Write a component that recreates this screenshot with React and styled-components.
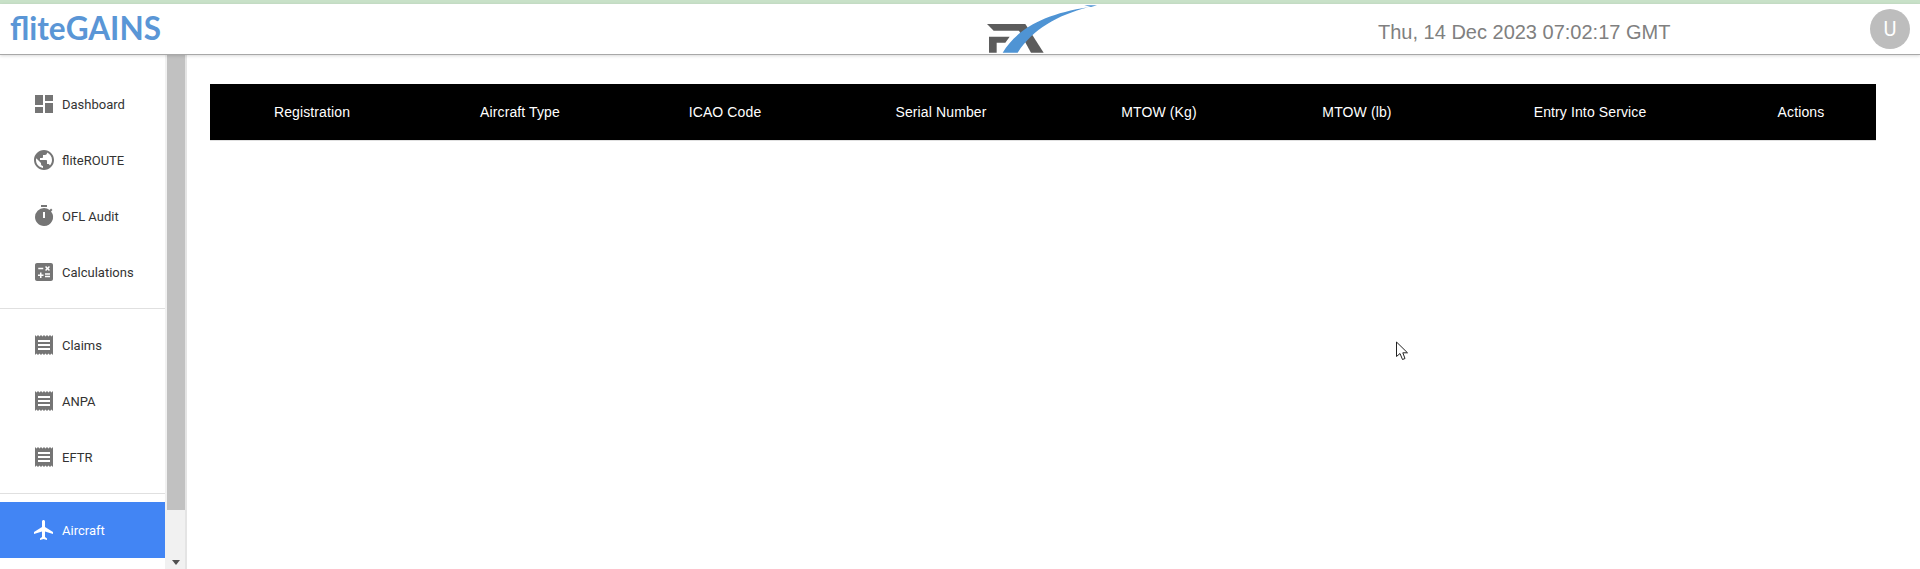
import React from "react";
import styled, { createGlobalStyle } from "styled-components";
import { MdDashboard, MdPublic, MdTimer, MdCalculate, MdReceipt, MdFlight } from "react-icons/md";

const Global = createGlobalStyle`
  html, body { margin: 0; padding: 0; background: #fff; height: 569px; overflow: hidden; }
  * { box-sizing: border-box; }
`;

const Page = styled.div`
  position: relative;
  width: 1920px;
  height: 569px;
  display: flex;
  flex-direction: column;
  overflow: hidden;
  font-family: Roboto, sans-serif;
`;
const TopBand = styled.div`
  height: 4px;
  background: #c8e1c8;
  flex: none;
`;
const Header = styled.header`
  height: 51px;
  flex: none;
  display: grid;
  grid-template-columns: 960px 408px 1fr auto;
  align-items: center;
  background: #fff;
  border-bottom: 1px solid #a8a8a8;
  box-shadow: 0 1px 3px rgba(0, 0, 0, 0.15);
  padding: 0 10px;
  position: relative;
  z-index: 1;
`;
const Brand = styled.div`
  display: flex;
  align-items: center;
  justify-content: space-between;
  height: 50px;
`;
const BrandName = styled.span`
  font-family: Lato, "Open Sans", sans-serif;
  font-weight: 700;
  font-size: 31.5px;
  line-height: 44px;
  color: #5a96d6;
  font-variant-ligatures: common-ligatures;
  margin-top: -3px;
`;
const FxMark = styled.svg`
  display: block;
  width: 113.33px;
  height: 50px;
  margin-right: -130px;
  flex: none;
`;
const Clock = styled.div`
  grid-column: 3;
  font-family: "Liberation Sans", Arial, sans-serif;
  font-size: 20px;
  color: #808080;
  margin-top: 7px;
`;
const Avatar = styled.div`
  grid-column: 4;
  width: 40px;
  height: 40px;
  border-radius: 50%;
  background: #bdbdbd;
  color: #fff;
  display: flex;
  align-items: center;
  justify-content: center;
  font-size: 20px;
`;
const Body = styled.div`
  flex: 1;
  display: flex;
  min-height: 0;
`;
const Sidebar = styled.aside`
  width: 165px;
  flex: none;
  padding-top: 21px;
  display: flex;
  flex-direction: column;
`;
const NavItem = styled.div`
  height: 56px;
  flex: none;
  display: flex;
  align-items: center;
  gap: 6px;
  padding-left: 32px;
  font-size: 13px;
  color: ${(p) => (p.$active ? "#fff" : "#333")};
  background: ${(p) => (p.$active ? "#4285f4" : "transparent")};
  svg { color: ${(p) => (p.$active ? "#fff" : "#757575")}; flex: none; }
`;
const Divider = styled.hr`
  margin: 8px 0;
  border: 0;
  border-top: 1px solid #e0e0e0;
  height: 1px;
  flex: none;
`;
const ScrollTrack = styled.div`
  width: 22px;
  flex: none;
  background: #f1f1f1;
  border-right: 2px solid #e4e4e4;
  padding-left: 2px;
  display: flex;
  flex-direction: column;
  justify-content: space-between;
`;
const ScrollThumb = styled.div`
  height: 455px;
  width: 18px;
  background: #c1c1c1;
`;
const ScrollArrow = styled.div`
  align-self: center;
  width: 0;
  height: 0;
  margin: 0 0 4px -1px;
  border-left: 4px solid transparent;
  border-right: 4px solid transparent;
  border-top: 5px solid #505050;
`;
const Main = styled.main`
  flex: 1;
  padding: 29px 44px 0 23px;
`;
const TableHead = styled.div`
  height: 57px;
  display: grid;
  grid-template-columns: 204px 212px 198px 234px 202px 194px 272px 150px;
  align-items: center;
  background: #000;
  border-bottom: 1px solid #e0e0e0;
`;
const HeadCell = styled.div`
  text-align: center;
  font-family: "Liberation Sans", Arial, sans-serif;
  font-size: 14px;
  letter-spacing: 0.12px;
  color: #fff;
`;
const Cursor = styled.svg`
  position: absolute;
  left: 1395px;
  top: 341px;
  width: 14px;
  height: 20px;
`;

const columns = ["Registration", "Aircraft Type", "ICAO Code", "Serial Number", "MTOW (Kg)", "MTOW (lb)", "Entry Into Service", "Actions"];

const Item = ({ icon: Icon, label, active }) => (
  <NavItem $active={active}>
    <Icon size={24} />
    {label}
  </NavItem>
);

export default function App() {
  return (
    <Page>
      <Global />
      <TopBand />
      <Header>
        <Brand>
          <BrandName>fliteGAINS</BrandName>
          <FxMark viewBox="80 12 340 150" aria-hidden="true">
            <path d="M80 72 H168 L180 92 H100 Z" fill="#5c5c5c" />
            <path d="M86 110 H148 L135 128 H109 V158 H86 Z" fill="#5c5c5c" />
            <path d="M165 72 H195 L250 158 H212 Z" fill="#5c5c5c" />
            <path d="M127 158 C170 88 250 42 384 22 C290 46 218 88 172 158 Z" fill="#4f94d4" />
            <path d="M372 16 L410 16 L392 21 Z" fill="#4f94d4" />
          </FxMark>
        </Brand>
        <Clock>Thu, 14 Dec 2023 07:02:17 GMT</Clock>
        <Avatar>U</Avatar>
      </Header>
      <Body>
        <Sidebar>
          <Item icon={MdDashboard} label="Dashboard" />
          <Item icon={MdPublic} label="fliteROUTE" />
          <Item icon={MdTimer} label="OFL Audit" />
          <Item icon={MdCalculate} label="Calculations" />
          <Divider />
          <Item icon={MdReceipt} label="Claims" />
          <Item icon={MdReceipt} label="ANPA" />
          <Item icon={MdReceipt} label="EFTR" />
          <Divider />
          <Item icon={MdFlight} label="Aircraft" active />
        </Sidebar>
        <ScrollTrack>
          <ScrollThumb />
          <ScrollArrow />
        </ScrollTrack>
        <Main>
          <TableHead>
            {columns.map((c) => (
              <HeadCell key={c}>{c}</HeadCell>
            ))}
          </TableHead>
        </Main>
      </Body>
      <Cursor viewBox="0 0 14 20" aria-hidden="true">
        <path d="M1.5 1 V15.5 L5 12.5 L7.5 18.5 L10 17.5 L7.8 11.8 H12.5 Z" fill="#fff" stroke="#222" strokeWidth="1" />
      </Cursor>
    </Page>
  );
}
